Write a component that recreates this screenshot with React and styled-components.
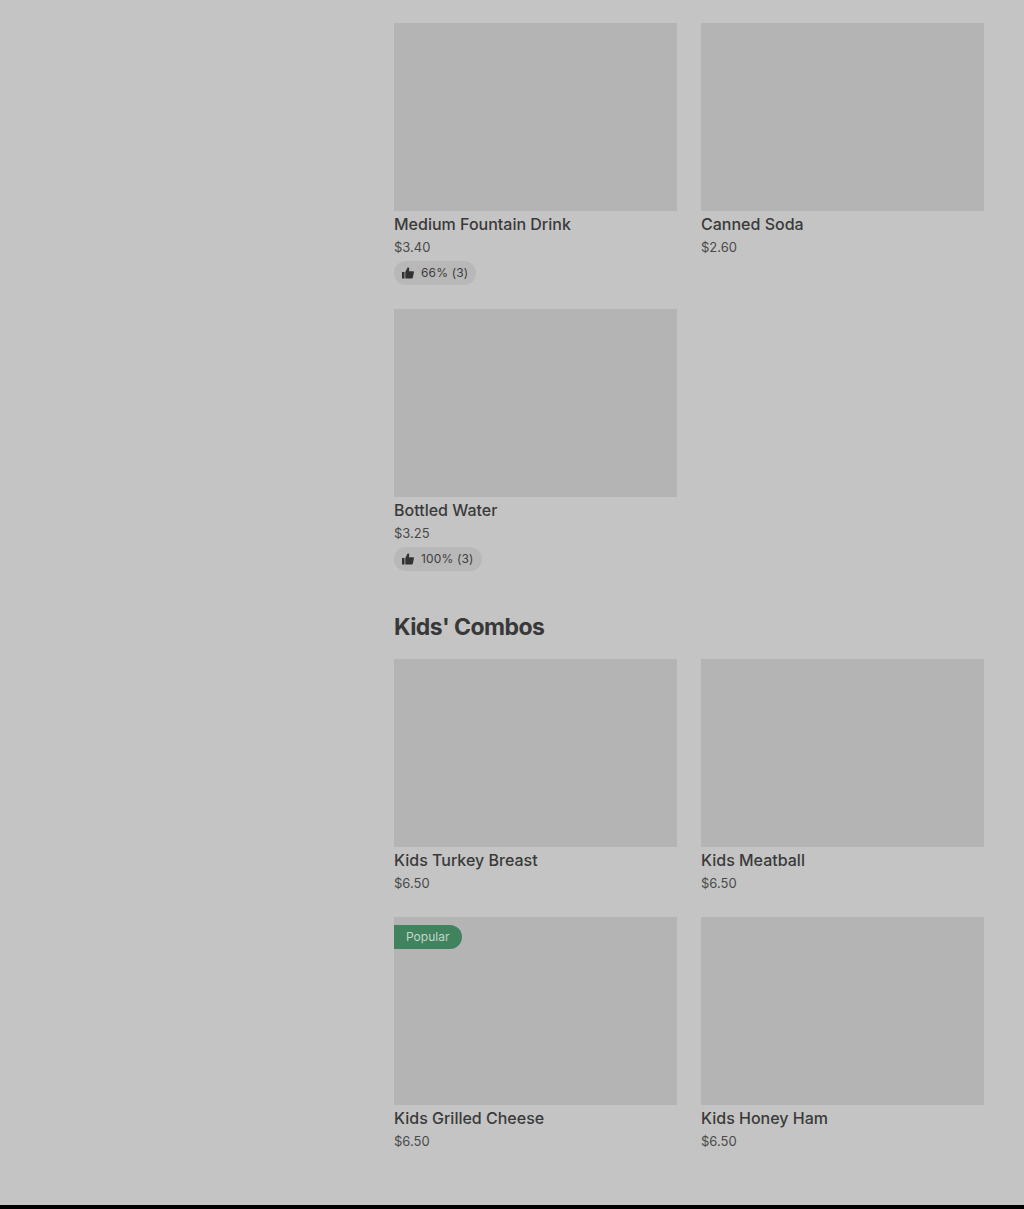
import React from 'react'
import styled, { createGlobalStyle } from 'styled-components';

const GlobalStyle = createGlobalStyle`
  html, body {
    margin: 0;
    padding: 0;
    background: #000;
  }
`

const Page = styled.div`
  height: 1205px;
  box-sizing: border-box;
  padding: 23px 40px 0 394px;
  background: #c4c4c4;
  color: #3a3a3a;
  font-family: Inter, "Liberation Sans", sans-serif;
  overflow: hidden;
`;

const ItemGrid = styled.div`
  display: grid;
  grid-template-columns: 283px 283px;
  column-gap: 24px;
  row-gap: 24px;
`;

const SectionTitle = styled.h2`
  margin: 41px 0 17px;
  height: 30px;
  font-size: 23px;
  line-height: 30px;
  font-weight: 700;
  letter-spacing: -0.55px;
  color: #383838;
`;

const Card = styled.div`
  position: relative;
  min-width: 0;
`;

const Photo = styled.div`
  height: 188px;
  background: #b4b4b4;
`;

const ItemName = styled.div`
  margin-top: 2px;
  height: 22px;
  font-size: 16px;
  line-height: 22px;
  font-weight: 500;
  color: #3a3a3a;
`;

const Price = styled.div`
  height: 20px;
  margin-top: 2px;
  font-size: 13px;
  line-height: 20px;
  color: #4a4a4a;
`;

const RatingPill = styled.div`
  display: inline-flex;
  align-items: center;
  gap: 7px;
  height: 24px;
  margin-top: 4px;
  padding: 0 8px;
  border-radius: 12px;
  background: #b8b8b8;
  font-size: 12px;
  line-height: 16px;
  letter-spacing: 0.15px;
  color: #3e3e3e;
  vertical-align: top;
`;

const PopularBadge = styled.div`
  position: absolute;
  top: 8px;
  left: 0;
  height: 24px;
  padding: 0 13px 0 12px;
  border-radius: 0 12px 12px 0;
  background: #41825f;
  color: #c3d6cb;
  font-size: 12px;
  line-height: 24px;
`;

const ThumbIcon = () => (
  <svg width="12" height="12" viewBox="0 0 12 12" fill="#333" style={{ flexShrink: 0 }}>
    <rect x="0" y="5" width="2.5" height="6.5" />
    <path d="M3.3 5 5.6 0.6c.9-.3 1.7.3 1.7 1.2L6.9 4.2h4c.7 0 1.2.6 1 1.3l-1.1 5.2c-.1.5-.5.8-1 .8H3.3z" />
  </svg>
)

const drinks = [
  { name: 'Medium Fountain Drink', price: '$3.40', rating: '66% (3)' },
  { name: 'Canned Soda', price: '$2.60' },
  { name: 'Bottled Water', price: '$3.25', rating: '100% (3)' },
]

const kidsCombos = [
  { name: 'Kids Turkey Breast', price: '$6.50' },
  { name: 'Kids Meatball', price: '$6.50' },
  { name: 'Kids Grilled Cheese', price: '$6.50', popular: true },
  { name: 'Kids Honey Ham', price: '$6.50' },
]

const MenuItem = ({ item }) => (
  <Card>
    <Photo />
    {item.popular && <PopularBadge>Popular</PopularBadge>}
    <ItemName>{item.name}</ItemName>
    <Price>{item.price}</Price>
    {item.rating &&
      <RatingPill>
        <ThumbIcon />
        {item.rating}
      </RatingPill>
    }
  </Card>
)

export default function App() {
  return (
    <>
      <GlobalStyle />
      <Page>
        <ItemGrid>
          {drinks.map(item => <MenuItem key={item.name} item={item} />)}
        </ItemGrid>
        <SectionTitle>Kids' Combos</SectionTitle>
        <ItemGrid>
          {kidsCombos.map(item => <MenuItem key={item.name} item={item} />)}
        </ItemGrid>
      </Page>
    </>
  )
}
